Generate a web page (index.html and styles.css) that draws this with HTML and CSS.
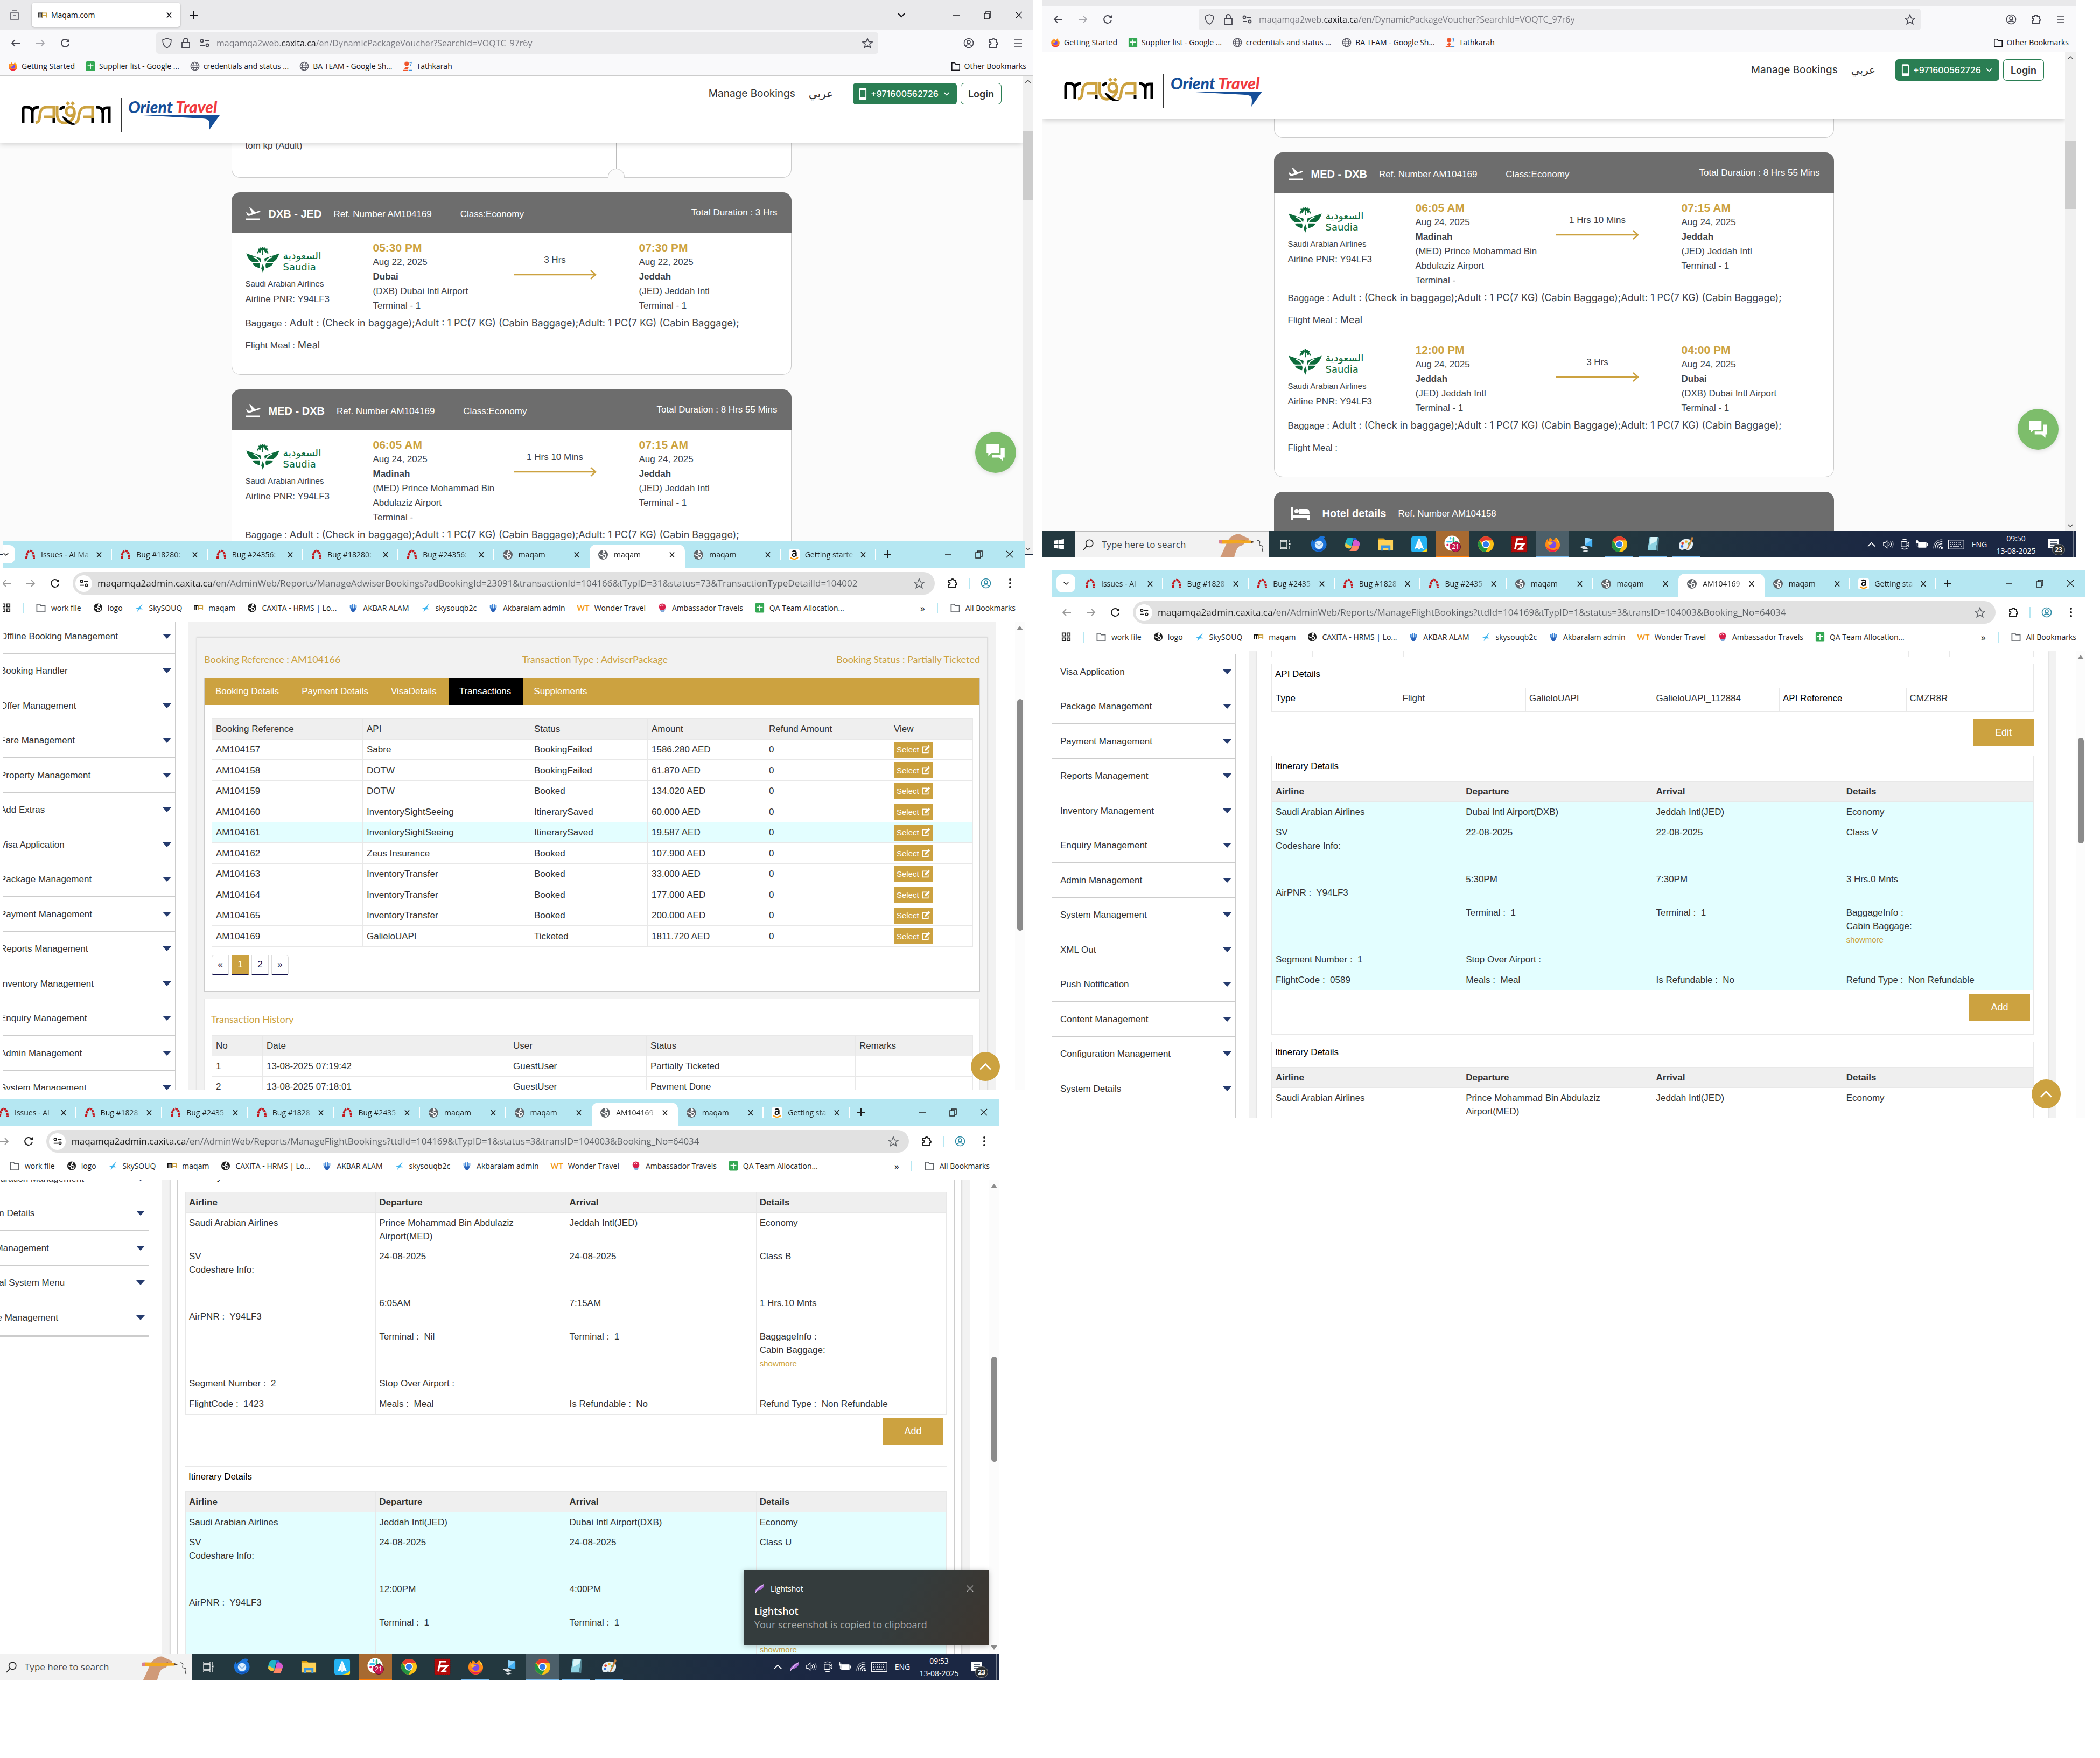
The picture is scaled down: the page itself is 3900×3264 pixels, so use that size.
FILE: index.html
```html
<!DOCTYPE html>
<html lang="en">
<head>
<meta charset="utf-8">
<title>Booking voucher review</title>
<link rel="stylesheet" href="styles.css">
</head>
<body>
<svg class="defs" aria-hidden="true">
  <symbol id="x" viewBox="0 0 20 20"><path d="M5 4l10 12M15 4L5 16" fill="none" stroke="currentColor" stroke-width="2"/></symbol>
  <symbol id="plus" viewBox="0 0 20 20"><path d="M10 3v14M3 10h14" fill="none" stroke="currentColor" stroke-width="2"/></symbol>
  <symbol id="chev" viewBox="0 0 20 20"><path d="M4 7l6 6 6-6" fill="none" stroke="currentColor" stroke-width="2"/></symbol>
  <symbol id="chevup" viewBox="0 0 20 20"><path d="M3 14l7-7 7 7" fill="none" stroke="currentColor" stroke-width="2"/></symbol>
  <symbol id="min" viewBox="0 0 20 20"><path d="M4 10h12" stroke="currentColor" stroke-width="1.5"/></symbol>
  <symbol id="restore" viewBox="0 0 20 20"><path d="M4 7h9v10H4zM7 7V4h9v10h-3" fill="none" stroke="currentColor" stroke-width="1.5"/></symbol>
  <symbol id="close" viewBox="0 0 20 20"><path d="M4 4l12 12M16 4L4 16" fill="none" stroke="currentColor" stroke-width="1.3"/></symbol>
  <symbol id="back" viewBox="0 0 20 20"><path d="M18 10H3M9 4l-6 6 6 6" fill="none" stroke="currentColor" stroke-width="1.8"/></symbol>
  <symbol id="fwd" viewBox="0 0 20 20"><path d="M2 10h15M11 4l6 6-6 6" fill="none" stroke="currentColor" stroke-width="1.8"/></symbol>
  <symbol id="reload" viewBox="0 0 20 20"><path d="M17 11a7 7 0 1 1-2-6l2 2" fill="none" stroke="currentColor" stroke-width="2"/><path d="M18 2v6h-6z" fill="currentColor"/></symbol>
  <symbol id="shield" viewBox="0 0 20 20"><path d="M10 1l8 3c0 7-2 12-8 15C4 16 2 11 2 4z" fill="none" stroke="currentColor" stroke-width="1.6"/></symbol>
  <symbol id="lock" viewBox="0 0 20 20"><path d="M3 9h14v10H3zM6 9V5a4 4 0 0 1 8 0v4" fill="none" stroke="currentColor" stroke-width="1.8"/></symbol>
  <symbol id="tune" viewBox="0 0 20 20"><circle cx="5" cy="6" r="2.5" fill="none" stroke="currentColor" stroke-width="1.8"/><circle cx="15" cy="14" r="2.5" fill="none" stroke="currentColor" stroke-width="1.8"/><path d="M10 6h8M2 14h8" stroke="currentColor" stroke-width="1.8"/></symbol>
  <symbol id="star" viewBox="0 0 20 20"><path d="M10 1.5l2.5 6 6.5.5-5 4.200 1.600 6.300L10 15l-5.600 3.500L6 12.200 1 8l6.500-.5z" fill="none" stroke="currentColor" stroke-width="1.600"/></symbol>
  <symbol id="person" viewBox="0 0 20 20"><circle cx="10" cy="10" r="8.500" fill="none" stroke="currentColor" stroke-width="1.600"/><circle cx="10" cy="8" r="3" fill="none" stroke="currentColor" stroke-width="1.600"/><path d="M4 16c2-4 10-4 12 0" fill="none" stroke="currentColor" stroke-width="1.600"/></symbol>
  <symbol id="puzzle" viewBox="0 0 20 20"><path d="M3 4h4.500a2.500 2 0 0 1 5 0H16v5a2 2 0 0 1 0 4v5H3v-5a2.500 2.500 0 0 0 0-5z" fill="none" stroke="currentColor" stroke-width="1.900"/></symbol>
  <symbol id="menu" viewBox="0 0 20 20"><path d="M3 4h14M3 10h14M3 16h14" stroke="currentColor" stroke-width="1.600"/></symbol>
  <symbol id="dots" viewBox="0 0 20 20"><circle cx="10" cy="3" r="2" fill="currentColor"/><circle cx="10" cy="10" r="2" fill="currentColor"/><circle cx="10" cy="17" r="2" fill="currentColor"/></symbol>
  <symbol id="folder" viewBox="0 0 20 20"><path d="M2 3h6l2 3h8v12H2z" fill="none" stroke="currentColor" stroke-width="1.800"/></symbol>
  <symbol id="apps" viewBox="0 0 20 20"><path d="M2 2h6v6H2zM12 2h6v6h-6zM2 12h6v6H2zM12 12h6v6h-6z" fill="none" stroke="currentColor" stroke-width="2"/></symbol>
  <symbol id="wire" viewBox="0 0 20 20"><g fill="none" stroke="#5b5b66" stroke-width="1.600"><circle cx="10" cy="10" r="8.500"/><ellipse cx="10" cy="10" rx="4" ry="8.500"/><path d="M2 7.500h16M2 12.500h16"/></g></symbol>
  <symbol id="globe" viewBox="0 0 20 20"><circle cx="10" cy="10" r="9" fill="currentColor"/><path d="M10 3c4 0 3 3 1 3s-2 3 0 3 5 1 4 4-4 4-5 3 1-3-1-4-5-1-6-3" fill="none" stroke="#fff" stroke-width="2"/></symbol>
  <symbol id="redmine" viewBox="0 0 20 20"><path d="M3 17c0-19 14-19 14 0" fill="none" stroke="#c4161c" stroke-width="4" stroke-dasharray="4.500 1"/></symbol>
  <symbol id="amazon" viewBox="0 0 20 20"><rect width="20" height="20" rx="3" fill="#fff"/><path d="M6.500 5c1-3 7-3 7 1v6l1 1M13 7c-9 0-7 7-3 6 2 0 3-2 3-4" fill="none" stroke="#111" stroke-width="2.200"/><path d="M3 15c4 4 10 4 14 0" fill="none" stroke="#f90" stroke-width="2"/></symbol>
  <symbol id="sheet" viewBox="0 0 20 20"><rect x="1" width="18" height="20" rx="2" fill="#34a853"/><path d="M10 4v12M4 9h12" stroke="#fff" stroke-width="2"/></symbol>
  <symbol id="bird" viewBox="0 0 20 20"><path d="M17 1l-5 9 5 3-7 0-5 6 2-7-5-1 7-2z" fill="#3cb4ef"/></symbol>
  <symbol id="ma" viewBox="0 0 20 20"><path d="M1 15V6h4v9M5 6h4v9" fill="none" stroke="#111" stroke-width="2"/><path d="M10 15V6h8v9M10 11h8" fill="none" stroke="#cca240" stroke-width="2"/></symbol>
  <symbol id="crest" viewBox="0 0 20 20"><path d="M4 4v6l3 3V5M8 2v10M12 2v10M16 4v6l-3 3V5" fill="none" stroke="#3f86d8" stroke-width="2"/><path d="M4 11c1 5 4 8 6 8s5-3 6-8z" fill="#2a62b8"/></symbol>
  <symbol id="ball" viewBox="0 0 20 20"><path d="M3 11a8 7 0 0 0 14 1l-4 7H8z" fill="#7fa7d8"/><circle cx="10" cy="8" r="7" fill="#d81e4a"/><path d="M6 6c3-3 5-2 6 0" stroke="#fff" stroke-width="1.500" fill="none"/></symbol>
  <symbol id="tath" viewBox="0 0 20 20"><circle cx="8" cy="5" r="4.500" fill="#f0562b"/><path d="M3 15c3-6 8-4 9-2l-3 4z" fill="#f0562b"/><path d="M14 3l4-1-2 7" stroke="#3b8ede" fill="none" stroke-width="1.500"/><path d="M1 18.500h10" stroke="#f0562b" stroke-width="2"/><path d="M12 18.500h7" stroke="#3b8ede" stroke-width="2"/></symbol>
  <symbol id="firefox" viewBox="0 0 32 32"><path d="M22 2c2 4 8 7 8 15a14 14 0 0 1-28 0c0-5 2-9 4-11l1 4c2-2 3-5 3-7 3 1 5 4 6 6 3-1 5-4 6-7z" fill="#ff8a16"/><path d="M3 20a13.500 13.500 0 0 0 26 1c-3 7-19 9-26-1z" fill="#f0214b"/><path d="M22 2c2 4 7 8 7 13l-4-5z" fill="#ffdf3d"/><circle cx="16" cy="17" r="7" fill="#7a4be8"/><path d="M7 12c4-2 7 1 10 1-1 3-5 2-6 5-2-1-4-3-4-6z" fill="#ffb52e"/></symbol>
  <symbol id="chrome" viewBox="0 0 32 32"><circle cx="16" cy="16" r="15" fill="#fbc116"/><path d="M16 16L3 8.500A15 15 0 0 1 29 8.500H16z" fill="#e33b2e"/><path d="M3 8.500a15 15 0 0 0 12 22.400l7-11.400-12 0z" fill="#229342"/><circle cx="16" cy="16" r="7.500" fill="#fff"/><circle cx="16" cy="16" r="5.800" fill="#2f7bed"/></symbol>
  <symbol id="tbird" viewBox="0 0 32 32"><path d="M14 4c5-5 13-4 14-1-2 1-3 1-2 3 5 4 6 13 2 18-6 9-20 8-25 0C0 18 0 10 4 7l2 4c2-3 4-5 8-7z" fill="#1a73d9"/><path d="M4 18c4 12 20 10 24 2-2 10-18 16-24-2z" fill="#1150b5"/><circle cx="16" cy="17" r="8" fill="#dcefff"/><path d="M10 14l6 5 6-5" fill="none" stroke="#8ab8e6" stroke-width="2"/></symbol>
  <symbol id="copilot" viewBox="0 0 32 32"><path d="M10 3h10c-4 2-3 10-6 19-1 3-5 3-8 1-3-1-5-5-4-8C4 9 5 3 10 3z" fill="#22b5c8"/><path d="M3 14l11 6-1 3c-3 2-9 1-11-4z" fill="#f2c438"/><path d="M16 3h5c3 0 3 5 5 5h-9z" fill="#1d62d6"/><path d="M22 29H12c4-2 3-10 6-19 1-3 5-3 8-1 3 1 5 5 4 8-2 6-3 12-8 12z" fill="#d65ad0"/><path d="M29 19c-2 6-3 10-7 10H10c4-2 4-7 5-10z" fill="#ff8763"/></symbol>
  <symbol id="explorer" viewBox="0 0 32 32"><path d="M2 5h10l3 3h15v19H2z" fill="#ffd257"/><path d="M2 5h10l3 3H2z" fill="#dd9a07"/><path d="M7 28V18h18v10h-4v-5H11v5z" fill="#3a96e3"/></symbol>
  <symbol id="plane" viewBox="0 0 32 32"><rect x="1" y="1" width="30" height="30" rx="4" fill="#25b3f3"/><path d="M16 31c7-1 11-3 15-7v4a3 3 0 0 1-3 3z" fill="#ffd810"/><path d="M16 3l9 22-6-2-3 4-3-4-6 2z" fill="#fff"/><path d="M16 9v15" stroke="#8ad0f5" stroke-width="1.500"/></symbol>
  <symbol id="slack" viewBox="0 0 32 32"><circle cx="15" cy="15" r="14.500" fill="#fff"/><g stroke-width="3.600" stroke-linecap="round"><path d="M6 12h7M12 5v1" stroke="#36c5f0"/><path d="M18 5v7M23 12h1" stroke="#2eb67d"/><path d="M12 18v6M6 18h1" stroke="#e01e5a"/></g><circle cx="22" cy="22" r="9.500" fill="#c8174f" stroke="#55122b"/></symbol>
  <symbol id="fz" viewBox="0 0 32 32"><rect x="1" y="1" width="30" height="30" fill="#b50a0a" stroke="#7b0000" stroke-dasharray="2 2"/><path d="M8 25L12 6h11M10 15h8M16 15h9l-9 10h8" fill="none" stroke="#fff" stroke-width="3.400"/></symbol>
  <symbol id="remote" viewBox="0 0 32 32"><path d="M14 3l14 3v15l-14-3z" fill="#45b2f5"/><path d="M14 3l14 3-14 11z" fill="#8fd4fb"/><path d="M4 21l9-2 8 5-9 2zM9 29l7-2 5 2-7 2z" fill="#dfe5e8"/></symbol>
  <symbol id="notepad" viewBox="0 0 32 32"><path d="M10 2h16l-4 25H6z" fill="#8ed3e2"/><path d="M12 2h13l-2 8-13 7z" fill="#d9f4f7"/><path d="M22 27l4-25 2 1-2 26z" fill="#4f7f8d"/></symbol>
  <symbol id="paint" viewBox="0 0 32 32"><path d="M16 6C8 6 2 12 2 19s5 9 9 7 5 1 8 1c7 0 10-6 10-12S23 6 16 6z" fill="#e3eef4"/><circle cx="9" cy="14" r="2.500" fill="#e3402d"/><circle cx="16" cy="11" r="2.500" fill="#f0b429"/><circle cx="8" cy="20" r="2.500" fill="#2c6ee0"/><circle cx="22" cy="15" r="2.500" fill="#38a851"/><path d="M27 1l3 3-11 22-2-1z" fill="#c7813a"/></symbol>
  <symbol id="taskview" viewBox="0 0 24 24"><g fill="none" stroke="#fff" stroke-width="1.300"><path d="M3 7h12v10H3zM3 3v2h12V3M3 21v-2h12v2M20 3v5M20 14v7"/></g><path d="M18.500 9.500h3v3h-3z" fill="#fff"/></symbol>
  <symbol id="win" viewBox="0 0 20 20"><path d="M1 3.500l8-1v7H1zM10 2.300l9-1.300v8.500h-9zM1 10.500h8v7l-8-1zM10 10.500h9V19l-9-1.300z" fill="#fff"/></symbol>
  <symbol id="search" viewBox="0 0 20 20"><circle cx="12" cy="8" r="6" fill="none" stroke="#222" stroke-width="1.500"/><path d="M8 12l-6 7" stroke="#222" stroke-width="1.500"/></symbol>
  <symbol id="hand" viewBox="0 0 90 48"><path d="M4 48C14 28 18 12 26 9c6-5 14-6 18-2l14 6-2 5-6 1c-2 6-6 7-10 8-4 2-7 9-10 21z" fill="#d09a78"/><path d="M34 20c5-3 12-2 16-4" fill="none" stroke="#9a6849" stroke-width="2"/><path d="M1 16l6-.5v7l-6-.5z" fill="#d98192"/><path d="M7 15.500l54 1v5L7 22.500z" fill="#f3a81f"/><path d="M61 16.500l7 3-7 2z" fill="#59422e"/><path d="M72 16c12 1 0 9 8 10s-1 9 4 11" fill="none" stroke="#4b4b4b" stroke-width="1.300"/></symbol>
  <symbol id="sound" viewBox="0 0 24 24"><g fill="none" stroke="#fff" stroke-width="1.300"><path d="M3 9h3l4-4v14l-4-4H3zM13 9c2 2 2 4 0 6M16 7c3 3 3 7 0 10"/><path d="M19 5c4 4 4 10 0 14" opacity=".5"/></g></symbol>
  <symbol id="cam" viewBox="0 0 24 24"><g fill="none" stroke="#fff" stroke-width="1.400"><rect x="5" y="7" width="11" height="10" rx="1"/><path d="M16 11l4-3v8l-4-3M6 4c3-2 8-2 11 0M6 20c3 2 8 2 11 0"/></g></symbol>
  <symbol id="battery" viewBox="0 0 24 24"><path d="M6 8h15v10H6z" fill="#fff" stroke="#fff"/><path d="M22 10h2v5h-2zM1 6h5v4H1zM2 3h1v3H2zM4 3h1v3H4zM3 10h1v5h3v1H3z" fill="#fff"/></symbol>
  <symbol id="wifi" viewBox="0 0 24 24"><g fill="none" stroke="#fff" stroke-width="1.400"><path d="M14 20c0-3 2-5 6-5M10 20c0-6 4-9 10-9M6 20C6 12 11 7 20 7"/><path d="M3 20C3 10 9 3 20 3" opacity=".6"/></g><circle cx="19" cy="19" r="2" fill="#fff"/></symbol>
  <symbol id="keyb" viewBox="0 0 30 18"><rect x=".7" y=".7" width="28.600" height="16.600" fill="none" stroke="#fff" stroke-width="1.300"/><path d="M4 5h22M4 9h22" stroke="#fff" stroke-width="1.500" stroke-dasharray="1.500 2"/><path d="M4 13h3M9 13h12M23 13h3" stroke="#fff" stroke-width="1.300"/></symbol>
  <symbol id="note" viewBox="0 0 20 20"><path d="M0 0h20v17h-7l-3 3v-3H0z" fill="#fff"/><path d="M4 5h12M4 9h12M4 13h8" stroke="#22304a" stroke-width="1.300"/></symbol>
  <symbol id="feather" viewBox="0 0 20 20"><path d="M1 19C1 9 10 4 19 1c0 8-5 12-14 14z" fill="#a563cf"/><path d="M2 18C6 11 12 6 18 2" stroke="#e5cff3" stroke-width="1.500" fill="none"/></symbol>
  <symbol id="landing" viewBox="0 0 28 28"><path d="M1 11l3 1 2 2 6-1L7 2l3 1 8 8 8-3c2 0 2 2 0 3L6 18l-3-2z" fill="#fff"/><path d="M1 24h26" stroke="#fff" stroke-width="3"/></symbol>
  <symbol id="bed" viewBox="0 0 34 26"><path d="M0 1h4v16h30v9h-4v-5H4v5H0z" fill="#fff"/><circle cx="10" cy="9" r="4" fill="#fff"/><path d="M15 5h14c4 0 5 3 5 10H15z" fill="#fff"/></symbol>
  <symbol id="arrow" viewBox="0 0 154 18"><path d="M0 9h152M143 1l9 8-9 8" fill="none" stroke="#cca240" stroke-width="2.500"/></symbol>
  <symbol id="phone" viewBox="0 0 16 24"><path d="M3 0h10a2 2 0 0 1 2 2v20a2 2 0 0 1-2 2H3a2 2 0 0 1-2-2V2a2 2 0 0 1 2-2zm0 4v14h10V4z" fill="#fff"/></symbol>
  <symbol id="chat" viewBox="0 0 40 40"><path d="M4 5h22v16H13l-6 5v-5H4z" fill="#fff"/><path d="M29 12h7v17h-3v6l-7-6H14v-5h15z" fill="#fff"/></symbol>
  <symbol id="edit" viewBox="0 0 20 20"><path d="M15 11v6H3V4h9" fill="none" stroke="#fff" stroke-width="2"/><path d="M7 13l1-4 8-8 3 3-8 8z" fill="#fff"/></symbol>
  <symbol id="saudia" viewBox="0 0 64 50"><g fill="#0c6b3b"><path d="M0 13l29 10-3 18c-7-1-13-5-14-9l4 0C6 27 3 22 0 13zM64 13L35 23l3 18c7-1 13-5 14-9l-4 0c10-5 13-10 16-19z"/><path d="M29 42l3-9 3 9-3 8zM31 4h2v12h-2z"/></g><g stroke="#0c6b3b" stroke-width="2.500" fill="none"><path d="M22 13c1-5 5-8 10-8s9 3 10 8M26 12c1-4 3-7 6-7s5 3 6 7M23 5l18 0M27 2l5 3 5-3M32 0v5"/></g><path d="M14 20c8 2 13 8 14 18M50 20c-8 2-13 8-14 18M12 31l16 0M52 31l-16 0" stroke="#fff" stroke-width="2" fill="none"/></symbol>
  <symbol id="maqam" viewBox="0 0 168 46"><g fill="none" stroke="#000" stroke-width="5"><path d="M4 40V15c0-3 1-4 4-4h3c8 0 10 5 10 10v19M21 21c0-6 3-10 12-10M164 40V12h-4c-8 0-8 6-8 12v16M152 22c0-7-4-11-12-11M61 32v8M133 32v8M73 16c1-4 4-5 8-5"/></g><g fill="none" stroke="#cca240" stroke-width="5"><path d="M27 40c8-1 7-7 8-14 1-11 5-15 13-15h13v18H43M67 8v16c0 12 8 17 15 16 12-1 19-12 17-22-1-10-15-9-15 0 0 9 9 12 15 5M101 40c7-2 5-9 7-16 2-10 6-13 13-13h12v18h-18"/></g><path d="M76 28c9 0 14 14 28 14-9 5-21 0-28-14z" fill="#000"/><path d="M87 0l4 4-4 4-4-4zM96 0l4 4-4 4-4-4z" fill="#cca240"/></symbol>
  <symbol id="swoosh" viewBox="0 0 142 28"><path d="M0 0h142l-20 28c2-17 2-21-12-22z" fill="#164f99"/></symbol>
</svg>

<main class="desk">
<div class="col">

<section class="win ff ff-top">
  <div class="ff-in">
    <div class="ff-tabs"><button class="ib recent" aria-label="Recent"><svg viewBox="0 0 20 20"><path d="M3 6h14v12H3zM5 2h10M8 11h4" fill="none" stroke="#5b5b66" stroke-width="1.700"/></svg></button>
      <div class="ff-tab"><svg><use href="#ma"/></svg><span>Maqam.com</span><button class="ib" aria-label="Close tab"><svg><use href="#x"/></svg></button></div>
      <button class="ib" aria-label="New tab"><svg><use href="#plus"/></svg></button>
      <div class="wc"><button class="ib first" aria-label="List tabs"><svg><use href="#chev"/></svg></button><button class="ib" aria-label="Minimise"><svg><use href="#min"/></svg></button><button class="ib" aria-label="Restore"><svg><use href="#restore"/></svg></button><button class="ib" aria-label="Close"><svg><use href="#close"/></svg></button></div>
    </div>
    <div class="ff-bar"><button class="ib" aria-label="Back"><svg><use href="#back"/></svg></button><button class="ib dim" aria-label="Forward"><svg><use href="#fwd"/></svg></button><button class="ib" aria-label="Reload"><svg><use href="#reload"/></svg></button>
      <div class="ff-url"><svg><use href="#shield"/></svg><svg><use href="#lock"/></svg><svg><use href="#tune"/></svg><input class="addr" aria-label="Address" value="maqamqa2web.caxita.ca/en/DynamicPackageVoucher?SearchId=VOQTC_97r6y"><svg><use href="#star"/></svg></div>
      <div class="ff-tools"><button class="ib" aria-label="Account"><svg><use href="#person"/></svg></button><button class="ib" aria-label="Extensions"><svg><use href="#puzzle"/></svg></button><button class="ib" aria-label="Menu"><svg><use href="#menu"/></svg></button></div>
    </div>
    <div class="ff-marks"><a href="#"><svg><use href="#firefox"/></svg>Getting Started</a><a href="#"><svg><use href="#sheet"/></svg>Supplier list - Google ...</a><a href="#"><svg><use href="#wire"/></svg>credentials and status ...</a><a href="#"><svg><use href="#wire"/></svg>BA TEAM - Google Sh...</a><a href="#"><svg><use href="#tath"/></svg>Tathkarah</a><a class="end" href="#"><svg><use href="#folder"/></svg>Other Bookmarks</a></div>
    <div class="ff-body">
      <div class="site">
        <header class="site-head"><svg class="maqam"><use href="#maqam"/></svg><i class="rule"></i><div class="orient"><span><b>Orient</b> <em>Travel</em></span><svg><use href="#swoosh"/></svg></div>
          <nav><a href="#">Manage Bookings</a><a href="#" lang="ar" class="ar">عربي</a><button class="call"><svg class="ph"><use href="#phone"/></svg>+971600562726<svg class="cv"><use href="#chev"/></svg></button><button class="login">Login</button></nav></header>
        <div class="cards">
          <article class="card pax"><p>tom kp (Adult)</p><i class="dotted"></i><i class="cut"></i></article>
          <article class="card">
            <header><svg class="hi"><use href="#landing"/></svg><h2>DXB - JED</h2><span class="ref">Ref. Number AM104169</span><span>Class:Economy</span><span class="dur">Total Duration : 3 Hrs</span></header>
            <div class="seg"><div class="air"><div class="sv"><svg><use href="#saudia"/></svg><div><span lang="ar">السعودية</span><b>Saudia</b></div></div><small>Saudi Arabian Airlines</small><p>Airline PNR: Y94LF3</p></div>
              <div class="pt"><time>05:30 PM</time><p>Aug 22, 2025</p><p><b>Dubai</b></p><p>(DXB) Dubai Intl Airport</p><p>Terminal - 1</p></div>
              <div class="mid"><span>3 Hrs</span><svg><use href="#arrow"/></svg></div>
              <div class="pt"><time>07:30 PM</time><p>Aug 22, 2025</p><p><b>Jeddah</b></p><p>(JED) Jeddah Intl</p><p>Terminal - 1</p></div>
              <p class="bag">Baggage : <span>Adult : (Check in baggage);Adult : 1 PC(7 KG) (Cabin Baggage);Adult: 1 PC(7 KG) (Cabin Baggage);</span></p><p class="meal">Flight Meal : <span>Meal</span></p></div>
          </article>
          <article class="card">
            <header><svg class="hi"><use href="#landing"/></svg><h2>MED - DXB</h2><span class="ref">Ref. Number AM104169</span><span>Class:Economy</span><span class="dur">Total Duration : 8 Hrs 55 Mins</span></header>
            <div class="seg"><div class="air"><div class="sv"><svg><use href="#saudia"/></svg><div><span lang="ar">السعودية</span><b>Saudia</b></div></div><small>Saudi Arabian Airlines</small><p>Airline PNR: Y94LF3</p></div>
              <div class="pt"><time>06:05 AM</time><p>Aug 24, 2025</p><p><b>Madinah</b></p><p>(MED) Prince Mohammad Bin Abdulaziz Airport</p><p>Terminal -</p></div>
              <div class="mid"><span>1 Hrs 10 Mins</span><svg><use href="#arrow"/></svg></div>
              <div class="pt"><time>07:15 AM</time><p>Aug 24, 2025</p><p><b>Jeddah</b></p><p>(JED) Jeddah Intl</p><p>Terminal - 1</p></div>
              <p class="bag">Baggage : <span>Adult : (Check in baggage);Adult : 1 PC(7 KG) (Cabin Baggage);Adult: 1 PC(7 KG) (Cabin Baggage);</span></p></div>
          </article>
        </div>
      </div>
      <div class="fsb"><svg><use href="#chevup"/></svg><i></i><svg class="dn"><use href="#chev"/></svg></div>
      <button class="chat" aria-label="Chat"><svg><use href="#chat"/></svg></button>
    </div>
  </div>
</section>

<section class="win cr cr-adviser">
  <div class="cr-in">
    <div class="strip"><button class="tsearch" aria-label="Search tabs"><svg><use href="#chev"/></svg></button>
      <div class="tabs"><div class="tab"><svg><use href="#redmine"/></svg><span>Issues - AI Ma</span><svg class="tx"><use href="#x"/></svg></div><div class="tab"><svg><use href="#redmine"/></svg><span>Bug #18280:</span><svg class="tx"><use href="#x"/></svg></div><div class="tab"><svg><use href="#redmine"/></svg><span>Bug #24356:</span><svg class="tx"><use href="#x"/></svg></div><div class="tab"><svg><use href="#redmine"/></svg><span>Bug #18280:</span><svg class="tx"><use href="#x"/></svg></div><div class="tab"><svg><use href="#redmine"/></svg><span>Bug #24356:</span><svg class="tx"><use href="#x"/></svg></div><div class="tab"><svg class="gg"><use href="#globe"/></svg><span>maqam</span><svg class="tx"><use href="#x"/></svg></div><div class="tab on"><svg class="gg"><use href="#globe"/></svg><span>maqam</span><svg class="tx"><use href="#x"/></svg></div><div class="tab"><svg class="gg"><use href="#globe"/></svg><span>maqam</span><svg class="tx"><use href="#x"/></svg></div><div class="tab"><svg><use href="#amazon"/></svg><span>Getting starte</span><svg class="tx"><use href="#x"/></svg></div></div>
      <button class="ib" aria-label="New tab"><svg><use href="#plus"/></svg></button>
      <div class="wc"><button class="ib" aria-label="Minimise"><svg><use href="#min"/></svg></button><button class="ib" aria-label="Restore"><svg><use href="#restore"/></svg></button><button class="ib" aria-label="Close"><svg><use href="#close"/></svg></button></div></div>
    <div class="cbar"><button class="ib dim" aria-label="Back"><svg><use href="#back"/></svg></button><button class="ib dim" aria-label="Forward"><svg><use href="#fwd"/></svg></button><button class="ib" aria-label="Reload"><svg><use href="#reload"/></svg></button>
      <div class="pill"><i><svg><use href="#tune"/></svg></i><input class="addr" aria-label="Address" value="maqamqa2admin.caxita.ca/en/AdminWeb/Reports/ManageAdwiserBookings?adBookingId=23091&amp;transactionId=104166&amp;tTypID=31&amp;status=73&amp;TransactionTypeDetailId=104002"><svg><use href="#star"/></svg></div>
      <div class="ctools"><button class="ib" aria-label="Extensions"><svg><use href="#puzzle"/></svg></button><i class="vs"></i><button class="ib me" aria-label="Profile"><svg><use href="#person"/></svg></button><button class="ib" aria-label="Menu"><svg><use href="#dots"/></svg></button></div></div>
    <div class="marks"><svg><use href="#apps"/></svg><i class="vs"></i><a href="#"><svg class="fo"><use href="#folder"/></svg>work file</a><a href="#"><svg><use href="#globe"/></svg>logo</a><a href="#"><svg><use href="#bird"/></svg>SkySOUQ</a><a href="#"><svg><use href="#ma"/></svg>maqam</a><a href="#"><svg><use href="#globe"/></svg>CAXITA - HRMS | Lo...</a><a href="#"><svg><use href="#crest"/></svg>AKBAR ALAM</a><a href="#"><svg><use href="#bird"/></svg>skysouqb2c</a><a href="#"><svg><use href="#crest"/></svg>Akbaralam admin</a><a href="#"><b class="wt">WT</b>Wonder Travel</a><a href="#"><svg><use href="#ball"/></svg>Ambassador Travels</a><a href="#"><svg><use href="#sheet"/></svg>QA Team Allocation...</a><span class="more">»</span><i class="vs"></i><a href="#"><svg class="fo"><use href="#folder"/></svg>All Bookmarks</a></div>
    <div class="cbody">
      <nav class="side"><ul><li><a href="#">Offline Booking Management</a></li><li><a href="#">Booking Handler</a></li><li><a href="#">Offer Management</a></li><li><a href="#">Fare Management</a></li><li><a href="#">Property Management</a></li><li><a href="#">Add Extras</a></li><li><a href="#">Visa Application</a></li><li><a href="#">Package Management</a></li><li><a href="#">Payment Management</a></li><li><a href="#">Reports Management</a></li><li><a href="#">Inventory Management</a></li><li><a href="#">Enquiry Management</a></li><li><a href="#">Admin Management</a></li><li><a href="#">System Management</a></li></ul></nav>
      <div class="main"><div class="sheet">
        <div class="heads"><span>Booking Reference : AM104166</span><span>Transaction Type : AdviserPackage</span><span>Booking Status : Partially Ticketed</span></div>
        <div class="panel">
          <div class="gtabs"><a href="#">Booking Details</a><a href="#">Payment Details</a><a href="#">VisaDetails</a><a href="#" class="on">Transactions</a><a href="#">Supplements</a></div>
          <table class="grid tx">
            <thead><tr><th>Booking Reference</th><th>API</th><th>Status</th><th>Amount</th><th>Refund Amount</th><th>View</th></tr></thead>
            <tbody>
            <tr><td>AM104157</td><td>Sabre</td><td>BookingFailed</td><td>1586.280 AED</td><td>0</td><td><button>Select <svg><use href="#edit"/></svg></button></td></tr>
            <tr><td>AM104158</td><td>DOTW</td><td>BookingFailed</td><td>61.870 AED</td><td>0</td><td><button>Select <svg><use href="#edit"/></svg></button></td></tr>
            <tr><td>AM104159</td><td>DOTW</td><td>Booked</td><td>134.020 AED</td><td>0</td><td><button>Select <svg><use href="#edit"/></svg></button></td></tr>
            <tr><td>AM104160</td><td>InventorySightSeeing</td><td>ItinerarySaved</td><td>60.000 AED</td><td>0</td><td><button>Select <svg><use href="#edit"/></svg></button></td></tr>
            <tr class="hl"><td>AM104161</td><td>InventorySightSeeing</td><td>ItinerarySaved</td><td>19.587 AED</td><td>0</td><td><button>Select <svg><use href="#edit"/></svg></button></td></tr>
            <tr><td>AM104162</td><td>Zeus Insurance</td><td>Booked</td><td>107.900 AED</td><td>0</td><td><button>Select <svg><use href="#edit"/></svg></button></td></tr>
            <tr><td>AM104163</td><td>InventoryTransfer</td><td>Booked</td><td>33.000 AED</td><td>0</td><td><button>Select <svg><use href="#edit"/></svg></button></td></tr>
            <tr><td>AM104164</td><td>InventoryTransfer</td><td>Booked</td><td>177.000 AED</td><td>0</td><td><button>Select <svg><use href="#edit"/></svg></button></td></tr>
            <tr><td>AM104165</td><td>InventoryTransfer</td><td>Booked</td><td>200.000 AED</td><td>0</td><td><button>Select <svg><use href="#edit"/></svg></button></td></tr>
            <tr><td>AM104169</td><td>GalieloUAPI</td><td>Ticketed</td><td>1811.720 AED</td><td>0</td><td><button>Select <svg><use href="#edit"/></svg></button></td></tr>
            </tbody></table>
          <div class="pager"><a href="#">«</a><a href="#" class="on">1</a><a href="#">2</a><a href="#">»</a></div>
        </div>
        <div class="panel hist"><h3>Transaction History</h3>
          <table class="grid hs"><thead><tr><th>No</th><th>Date</th><th>User</th><th>Status</th><th>Remarks</th></tr></thead><tbody>
          <tr><td>1</td><td>13-08-2025 07:19:42</td><td>GuestUser</td><td>Partially Ticketed</td><td></td></tr>
          <tr><td>2</td><td>13-08-2025 07:18:01</td><td>GuestUser</td><td>Payment Done</td><td></td></tr></tbody></table></div>
      </div></div>
      <div class="csb"><i></i></div>
      <button class="top" aria-label="Back to top"><svg><use href="#chevup"/></svg></button>
    </div>
  </div>
</section>

<section class="win cr cr-flight2">
  <div class="cr-in">
    <div class="strip"><button class="tsearch" aria-label="Search tabs"><svg><use href="#chev"/></svg></button>
      <div class="tabs"><div class="tab"><svg><use href="#redmine"/></svg><span>Issues - AI</span><svg class="tx"><use href="#x"/></svg></div><div class="tab"><svg><use href="#redmine"/></svg><span>Bug #1828</span><svg class="tx"><use href="#x"/></svg></div><div class="tab"><svg><use href="#redmine"/></svg><span>Bug #2435</span><svg class="tx"><use href="#x"/></svg></div><div class="tab"><svg><use href="#redmine"/></svg><span>Bug #1828</span><svg class="tx"><use href="#x"/></svg></div><div class="tab"><svg><use href="#redmine"/></svg><span>Bug #2435</span><svg class="tx"><use href="#x"/></svg></div><div class="tab"><svg class="gg"><use href="#globe"/></svg><span>maqam</span><svg class="tx"><use href="#x"/></svg></div><div class="tab"><svg class="gg"><use href="#globe"/></svg><span>maqam</span><svg class="tx"><use href="#x"/></svg></div><div class="tab on"><svg class="gg"><use href="#globe"/></svg><span>AM104169</span><svg class="tx"><use href="#x"/></svg></div><div class="tab"><svg class="gg"><use href="#globe"/></svg><span>maqam</span><svg class="tx"><use href="#x"/></svg></div><div class="tab"><svg><use href="#amazon"/></svg><span>Getting sta</span><svg class="tx"><use href="#x"/></svg></div></div>
      <button class="ib" aria-label="New tab"><svg><use href="#plus"/></svg></button>
      <div class="wc"><button class="ib" aria-label="Minimise"><svg><use href="#min"/></svg></button><button class="ib" aria-label="Restore"><svg><use href="#restore"/></svg></button><button class="ib" aria-label="Close"><svg><use href="#close"/></svg></button></div></div>
    <div class="cbar"><button class="ib dim" aria-label="Back"><svg><use href="#back"/></svg></button><button class="ib dim" aria-label="Forward"><svg><use href="#fwd"/></svg></button><button class="ib" aria-label="Reload"><svg><use href="#reload"/></svg></button>
      <div class="pill"><i><svg><use href="#tune"/></svg></i><input class="addr" aria-label="Address" value="maqamqa2admin.caxita.ca/en/AdminWeb/Reports/ManageFlightBookings?ttdId=104169&amp;tTypID=1&amp;status=3&amp;transID=104003&amp;Booking_No=64034"><svg><use href="#star"/></svg></div>
      <div class="ctools"><button class="ib" aria-label="Extensions"><svg><use href="#puzzle"/></svg></button><i class="vs"></i><button class="ib me" aria-label="Profile"><svg><use href="#person"/></svg></button><button class="ib" aria-label="Menu"><svg><use href="#dots"/></svg></button></div></div>
    <div class="marks"><svg><use href="#apps"/></svg><i class="vs"></i><a href="#"><svg class="fo"><use href="#folder"/></svg>work file</a><a href="#"><svg><use href="#globe"/></svg>logo</a><a href="#"><svg><use href="#bird"/></svg>SkySOUQ</a><a href="#"><svg><use href="#ma"/></svg>maqam</a><a href="#"><svg><use href="#globe"/></svg>CAXITA - HRMS | Lo...</a><a href="#"><svg><use href="#crest"/></svg>AKBAR ALAM</a><a href="#"><svg><use href="#bird"/></svg>skysouqb2c</a><a href="#"><svg><use href="#crest"/></svg>Akbaralam admin</a><a href="#"><b class="wt">WT</b>Wonder Travel</a><a href="#"><svg><use href="#ball"/></svg>Ambassador Travels</a><a href="#"><svg><use href="#sheet"/></svg>QA Team Allocation...</a><span class="more">»</span><i class="vs"></i><a href="#"><svg class="fo"><use href="#folder"/></svg>All Bookmarks</a></div>
    <div class="cbody">
      <nav class="side"><ul><li><a href="#">Configuration Management</a></li><li><a href="#">System Details</a></li><li><a href="#">User Management</a></li><li><a href="#">General System Menu</a></li><li><a href="#">Theme Management</a></li></ul></nav>
      <div class="main"><div class="sheet white"><div class="inner">
        <section class="itin"><h3>Itinerary Details</h3>
          <table class="grid it"><thead><tr><th>Airline</th><th>Departure</th><th>Arrival</th><th>Details</th></tr></thead><tbody>
          <tr><td>Saudi Arabian Airlines</td><td>Prince Mohammad Bin Abdulaziz Airport(MED)</td><td>Jeddah Intl(JED)</td><td>Economy</td></tr>
          <tr><td>SV<br>Codeshare Info:<br>&nbsp;</td><td>24-08-2025</td><td>24-08-2025</td><td>Class B</td></tr>
          <tr><td><br>AirPNR :&nbsp; Y94LF3</td><td>6:05AM</td><td>7:15AM</td><td>1 Hrs.10 Mnts</td></tr>
          <tr><td></td><td>Terminal :&nbsp; Nil</td><td>Terminal :&nbsp; 1</td><td>BaggageInfo :<br>Cabin Baggage:<br><a href="#">showmore</a></td></tr>
          <tr><td>Segment Number :&nbsp; 2</td><td>Stop Over Airport :</td><td></td><td></td></tr>
          <tr><td>FlightCode :&nbsp; 1423</td><td>Meals :&nbsp; Meal</td><td>Is Refundable :&nbsp; No</td><td>Refund Type :&nbsp; Non Refundable</td></tr></tbody></table>
          <button class="gold">Add</button></section>
        <section class="itin"><h3>Itinerary Details</h3>
          <table class="grid it blue"><thead><tr><th>Airline</th><th>Departure</th><th>Arrival</th><th>Details</th></tr></thead><tbody>
          <tr><td>Saudi Arabian Airlines</td><td>Jeddah Intl(JED)</td><td>Dubai Intl Airport(DXB)</td><td>Economy</td></tr>
          <tr><td>SV<br>Codeshare Info:<br>&nbsp;</td><td>24-08-2025</td><td>24-08-2025</td><td>Class U</td></tr>
          <tr><td><br>AirPNR :&nbsp; Y94LF3</td><td>12:00PM</td><td>4:00PM</td><td></td></tr>
          <tr><td></td><td>Terminal :&nbsp; 1</td><td>Terminal :&nbsp; 1</td><td><br><br><a href="#">showmore</a></td></tr></tbody></table></section>
      </div></div></div>
      <div class="csb end"><i></i></div>
    </div>
    <div class="taskbar"><button class="start" aria-label="Start"><svg><use href="#win"/></svg></button><label class="find"><svg class="mag"><use href="#search"/></svg><input type="text" placeholder="Type here to search" aria-label="Search"><svg class="hand"><use href="#hand"/></svg></label>
      <button aria-label="Task view"><svg class="sm"><use href="#taskview"/></svg></button><button aria-label="Mail"><svg><use href="#tbird"/></svg></button><button aria-label="Copilot"><svg><use href="#copilot"/></svg></button><button aria-label="Files"><svg><use href="#explorer"/></svg></button><button aria-label="Send"><svg><use href="#plane"/></svg></button><button class="alert"><svg><use href="#slack"/></svg><b>21</b></button><button aria-label="Chrome"><svg><use href="#chrome"/></svg></button><button aria-label="FileZilla"><svg><use href="#fz"/></svg></button><button class="run" aria-label="Firefox"><svg><use href="#firefox"/></svg></button><button aria-label="Remote"><svg><use href="#remote"/></svg></button><button class="run act" aria-label="Chrome window"><svg><use href="#chrome"/></svg></button><button class="run" aria-label="Notepad"><svg><use href="#notepad"/></svg></button><button class="run" aria-label="Paint"><svg><use href="#paint"/></svg></button>
      <div class="tray"><svg class="c"><use href="#chevup"/></svg><svg class="c"><use href="#feather"/></svg><svg><use href="#sound"/></svg><svg><use href="#cam"/></svg><svg><use href="#battery"/></svg><svg><use href="#wifi"/></svg><svg class="kb"><use href="#keyb"/></svg><span class="lang">ENG</span><span class="clock">09:53<br>13-08-2025</span><span class="notif"><svg><use href="#note"/></svg><b>23</b></span></div></div>
  </div>
  <aside class="toast"><div class="th"><svg><use href="#feather"/></svg><span>Lightshot</span><button class="ib" aria-label="Dismiss"><svg><use href="#close"/></svg></button></div><b>Lightshot</b><p>Your screenshot is copied to clipboard</p></aside>
</section>
</div>

<div class="col right">
<section class="win ff ff-scrolled">
  <div class="ff-in">
    <div class="ff-tabs"></div>
    <div class="ff-bar"><button class="ib" aria-label="Back"><svg><use href="#back"/></svg></button><button class="ib dim" aria-label="Forward"><svg><use href="#fwd"/></svg></button><button class="ib" aria-label="Reload"><svg><use href="#reload"/></svg></button>
      <div class="ff-url"><svg><use href="#shield"/></svg><svg><use href="#lock"/></svg><svg><use href="#tune"/></svg><input class="addr" aria-label="Address" value="maqamqa2web.caxita.ca/en/DynamicPackageVoucher?SearchId=VOQTC_97r6y"><svg><use href="#star"/></svg></div>
      <div class="ff-tools"><button class="ib" aria-label="Account"><svg><use href="#person"/></svg></button><button class="ib" aria-label="Extensions"><svg><use href="#puzzle"/></svg></button><button class="ib" aria-label="Menu"><svg><use href="#menu"/></svg></button></div>
    </div>
    <div class="ff-marks"><a href="#"><svg><use href="#firefox"/></svg>Getting Started</a><a href="#"><svg><use href="#sheet"/></svg>Supplier list - Google ...</a><a href="#"><svg><use href="#wire"/></svg>credentials and status ...</a><a href="#"><svg><use href="#wire"/></svg>BA TEAM - Google Sh...</a><a href="#"><svg><use href="#tath"/></svg>Tathkarah</a><a class="end" href="#"><svg><use href="#folder"/></svg>Other Bookmarks</a></div>
    <div class="ff-body">
      <div class="site">
        <header class="site-head"><svg class="maqam"><use href="#maqam"/></svg><i class="rule"></i><div class="orient"><span><b>Orient</b> <em>Travel</em></span><svg><use href="#swoosh"/></svg></div>
          <nav><a href="#">Manage Bookings</a><a href="#" lang="ar" class="ar">عربي</a><button class="call"><svg class="ph"><use href="#phone"/></svg>+971600562726<svg class="cv"><use href="#chev"/></svg></button><button class="login">Login</button></nav></header>
        <div class="cards">
          <article class="card tail"></article>
          <article class="card">
            <header><svg class="hi"><use href="#landing"/></svg><h2>MED - DXB</h2><span class="ref">Ref. Number AM104169</span><span>Class:Economy</span><span class="dur">Total Duration : 8 Hrs 55 Mins</span></header>
            <div class="seg"><div class="air"><div class="sv"><svg><use href="#saudia"/></svg><div><span lang="ar">السعودية</span><b>Saudia</b></div></div><small>Saudi Arabian Airlines</small><p>Airline PNR: Y94LF3</p></div>
              <div class="pt"><time>06:05 AM</time><p>Aug 24, 2025</p><p><b>Madinah</b></p><p>(MED) Prince Mohammad Bin Abdulaziz Airport</p><p>Terminal -</p></div>
              <div class="mid"><span>1 Hrs 10 Mins</span><svg><use href="#arrow"/></svg></div>
              <div class="pt"><time>07:15 AM</time><p>Aug 24, 2025</p><p><b>Jeddah</b></p><p>(JED) Jeddah Intl</p><p>Terminal - 1</p></div>
              <p class="bag">Baggage : <span>Adult : (Check in baggage);Adult : 1 PC(7 KG) (Cabin Baggage);Adult: 1 PC(7 KG) (Cabin Baggage);</span></p><p class="meal">Flight Meal : <span>Meal</span></p></div>
            <div class="seg"><div class="air"><div class="sv"><svg><use href="#saudia"/></svg><div><span lang="ar">السعودية</span><b>Saudia</b></div></div><small>Saudi Arabian Airlines</small><p>Airline PNR: Y94LF3</p></div>
              <div class="pt"><time>12:00 PM</time><p>Aug 24, 2025</p><p><b>Jeddah</b></p><p>(JED) Jeddah Intl</p><p>Terminal - 1</p></div>
              <div class="mid"><span>3 Hrs</span><svg><use href="#arrow"/></svg></div>
              <div class="pt"><time>04:00 PM</time><p>Aug 24, 2025</p><p><b>Dubai</b></p><p>(DXB) Dubai Intl Airport</p><p>Terminal - 1</p></div>
              <p class="bag">Baggage : <span>Adult : (Check in baggage);Adult : 1 PC(7 KG) (Cabin Baggage);Adult: 1 PC(7 KG) (Cabin Baggage);</span></p><p class="meal">Flight Meal :</p></div>
          </article>
          <article class="card hotel"><header><svg class="bed"><use href="#bed"/></svg><h2>Hotel details</h2><span class="ref">Ref. Number AM104158</span></header></article>
        </div>
      </div>
      <div class="fsb"><svg><use href="#chevup"/></svg><i></i><svg class="dn"><use href="#chev"/></svg></div>
      <button class="chat" aria-label="Chat"><svg><use href="#chat"/></svg></button>
    </div>
    <div class="taskbar"><button class="start" aria-label="Start"><svg><use href="#win"/></svg></button><label class="find"><svg class="mag"><use href="#search"/></svg><input type="text" placeholder="Type here to search" aria-label="Search"><svg class="hand"><use href="#hand"/></svg></label>
      <button aria-label="Task view"><svg class="sm"><use href="#taskview"/></svg></button><button aria-label="Mail"><svg><use href="#tbird"/></svg></button><button aria-label="Copilot"><svg><use href="#copilot"/></svg></button><button aria-label="Files"><svg><use href="#explorer"/></svg></button><button aria-label="Send"><svg><use href="#plane"/></svg></button><button class="alert"><svg><use href="#slack"/></svg><b>21</b></button><button aria-label="Chrome"><svg><use href="#chrome"/></svg></button><button aria-label="FileZilla"><svg><use href="#fz"/></svg></button><button class="run act" aria-label="Firefox"><svg><use href="#firefox"/></svg></button><button aria-label="Remote"><svg><use href="#remote"/></svg></button><button class="run" aria-label="Chrome window"><svg><use href="#chrome"/></svg></button><button class="run" aria-label="Notepad"><svg><use href="#notepad"/></svg></button><button class="run" aria-label="Paint"><svg><use href="#paint"/></svg></button>
      <div class="tray"><svg class="c"><use href="#chevup"/></svg><svg><use href="#sound"/></svg><svg><use href="#cam"/></svg><svg><use href="#battery"/></svg><svg><use href="#wifi"/></svg><svg class="kb"><use href="#keyb"/></svg><span class="lang">ENG</span><span class="clock">09:50<br>13-08-2025</span><span class="notif"><svg><use href="#note"/></svg><b>23</b></span></div></div>
  </div>
</section>

<section class="win cr cr-flight1">
  <div class="cr-in">
    <div class="strip"><button class="tsearch" aria-label="Search tabs"><svg><use href="#chev"/></svg></button>
      <div class="tabs"><div class="tab"><svg><use href="#redmine"/></svg><span>Issues - AI</span><svg class="tx"><use href="#x"/></svg></div><div class="tab"><svg><use href="#redmine"/></svg><span>Bug #1828</span><svg class="tx"><use href="#x"/></svg></div><div class="tab"><svg><use href="#redmine"/></svg><span>Bug #2435</span><svg class="tx"><use href="#x"/></svg></div><div class="tab"><svg><use href="#redmine"/></svg><span>Bug #1828</span><svg class="tx"><use href="#x"/></svg></div><div class="tab"><svg><use href="#redmine"/></svg><span>Bug #2435</span><svg class="tx"><use href="#x"/></svg></div><div class="tab"><svg class="gg"><use href="#globe"/></svg><span>maqam</span><svg class="tx"><use href="#x"/></svg></div><div class="tab"><svg class="gg"><use href="#globe"/></svg><span>maqam</span><svg class="tx"><use href="#x"/></svg></div><div class="tab on"><svg class="gg"><use href="#globe"/></svg><span>AM104169</span><svg class="tx"><use href="#x"/></svg></div><div class="tab"><svg class="gg"><use href="#globe"/></svg><span>maqam</span><svg class="tx"><use href="#x"/></svg></div><div class="tab"><svg><use href="#amazon"/></svg><span>Getting sta</span><svg class="tx"><use href="#x"/></svg></div></div>
      <button class="ib" aria-label="New tab"><svg><use href="#plus"/></svg></button>
      <div class="wc"><button class="ib" aria-label="Minimise"><svg><use href="#min"/></svg></button><button class="ib" aria-label="Restore"><svg><use href="#restore"/></svg></button><button class="ib" aria-label="Close"><svg><use href="#close"/></svg></button></div></div>
    <div class="cbar"><button class="ib dim" aria-label="Back"><svg><use href="#back"/></svg></button><button class="ib dim" aria-label="Forward"><svg><use href="#fwd"/></svg></button><button class="ib" aria-label="Reload"><svg><use href="#reload"/></svg></button>
      <div class="pill"><i><svg><use href="#tune"/></svg></i><input class="addr" aria-label="Address" value="maqamqa2admin.caxita.ca/en/AdminWeb/Reports/ManageFlightBookings?ttdId=104169&amp;tTypID=1&amp;status=3&amp;transID=104003&amp;Booking_No=64034"><svg><use href="#star"/></svg></div>
      <div class="ctools"><button class="ib" aria-label="Extensions"><svg><use href="#puzzle"/></svg></button><i class="vs"></i><button class="ib me" aria-label="Profile"><svg><use href="#person"/></svg></button><button class="ib" aria-label="Menu"><svg><use href="#dots"/></svg></button></div></div>
    <div class="marks"><svg><use href="#apps"/></svg><i class="vs"></i><a href="#"><svg class="fo"><use href="#folder"/></svg>work file</a><a href="#"><svg><use href="#globe"/></svg>logo</a><a href="#"><svg><use href="#bird"/></svg>SkySOUQ</a><a href="#"><svg><use href="#ma"/></svg>maqam</a><a href="#"><svg><use href="#globe"/></svg>CAXITA - HRMS | Lo...</a><a href="#"><svg><use href="#crest"/></svg>AKBAR ALAM</a><a href="#"><svg><use href="#bird"/></svg>skysouqb2c</a><a href="#"><svg><use href="#crest"/></svg>Akbaralam admin</a><a href="#"><b class="wt">WT</b>Wonder Travel</a><a href="#"><svg><use href="#ball"/></svg>Ambassador Travels</a><a href="#"><svg><use href="#sheet"/></svg>QA Team Allocation...</a><span class="more">»</span><i class="vs"></i><a href="#"><svg class="fo"><use href="#folder"/></svg>All Bookmarks</a></div>
    <div class="cbody">
      <nav class="side"><ul><li><a href="#">Visa Application</a></li><li><a href="#">Package Management</a></li><li><a href="#">Payment Management</a></li><li><a href="#">Reports Management</a></li><li><a href="#">Inventory Management</a></li><li><a href="#">Enquiry Management</a></li><li><a href="#">Admin Management</a></li><li><a href="#">System Management</a></li><li><a href="#">XML Out</a></li><li><a href="#">Push Notification</a></li><li><a href="#">Content Management</a></li><li><a href="#">Configuration Management</a></li><li><a href="#">System Details</a></li><li><a href="#"></a></li></ul></nav>
      <div class="main"><div class="sheet white"><div class="inner">
        <div class="rest"><i></i><i></i><i></i><i></i><i></i></div>
        <section class="api"><h3>API Details</h3><table class="grid ap"><tbody><tr><th>Type</th><td>Flight</td><td>GalieloUAPI</td><td>GalieloUAPI_112884</td><th>API Reference</th><td>CMZR8R</td></tr></tbody></table></section>
        <button class="gold edit">Edit</button>
        <section class="itin"><h3>Itinerary Details</h3>
          <table class="grid it blue"><thead><tr><th>Airline</th><th>Departure</th><th>Arrival</th><th>Details</th></tr></thead><tbody>
          <tr><td>Saudi Arabian Airlines</td><td>Dubai Intl Airport(DXB)</td><td>Jeddah Intl(JED)</td><td>Economy</td></tr>
          <tr><td>SV<br>Codeshare Info:<br>&nbsp;</td><td>22-08-2025</td><td>22-08-2025</td><td>Class V</td></tr>
          <tr><td><br>AirPNR :&nbsp; Y94LF3</td><td>5:30PM</td><td>7:30PM</td><td>3 Hrs.0 Mnts</td></tr>
          <tr><td></td><td>Terminal :&nbsp; 1</td><td>Terminal :&nbsp; 1</td><td>BaggageInfo :<br>Cabin Baggage:<br><a href="#">showmore</a></td></tr>
          <tr><td>Segment Number :&nbsp; 1</td><td>Stop Over Airport :</td><td></td><td></td></tr>
          <tr><td>FlightCode :&nbsp; 0589</td><td>Meals :&nbsp; Meal</td><td>Is Refundable :&nbsp; No</td><td>Refund Type :&nbsp; Non Refundable</td></tr></tbody></table>
          <button class="gold">Add</button></section>
        <section class="itin"><h3>Itinerary Details</h3>
          <table class="grid it"><thead><tr><th>Airline</th><th>Departure</th><th>Arrival</th><th>Details</th></tr></thead><tbody>
          <tr><td>Saudi Arabian Airlines</td><td>Prince Mohammad Bin Abdulaziz Airport(MED)</td><td>Jeddah Intl(JED)</td><td>Economy</td></tr></tbody></table></section>
      </div></div></div>
      <div class="csb"><i></i></div>
      <button class="top" aria-label="Back to top"><svg><use href="#chevup"/></svg></button>
    </div>
  </div>
</section>
</div>
</main>
</body>
</html>
```
FILE: styles.css
```css
* { box-sizing: border-box; }
body { margin: 0; background: #fff; color: #333; font: 17px/25px "Liberation Sans", Arial, sans-serif; }
a { color: inherit; text-decoration: none; }
p, h2, h3, ul { margin: 0; padding: 0; }
button { font: inherit; color: inherit; border: 0; padding: 0; background: none; }
svg { flex: none; display: block; }
.defs { position: absolute; width: 0; height: 0; }
.desk { display: grid; grid-template-columns: minmax(0, 1936fr) minmax(0, 1964fr); align-items: start; }
.win { position: relative; overflow: hidden; background: #fff; }
.ib { display: flex; align-items: center; justify-content: center; width: 30px; height: 30px; flex: none; }
.ib svg { width: 20px; height: 20px; }
.dim { opacity: .45; }
.addr { flex: 1; min-width: 0; border: 0; padding: 0; outline: 0; font: 16px/24px "Open Sans", "Noto Sans", sans-serif; background: transparent; color: transparent; -webkit-background-clip: text; background-clip: text; }

/* Firefox windows */
.ff { margin-right: 17px; }
.ff-top { height: 1031px; border-bottom: 2px solid #1d2b40; }
.right .ff { margin-right: 45px; height: 1035px; }
.ff-in { display: flex; flex-direction: column; height: 100%; font-family: "Open Sans", "Noto Sans", sans-serif; font-size: 14px; color: #15141a; }
.ff-scrolled .ff-in { margin-top: -44px; height: calc(100% + 44px); }
.ff-tabs { display: flex; align-items: center; height: 55px; flex: none; background: #e9e9eb; }
.recent { width: 54px; height: 55px; border-right: 1px solid #c4c4c8; }
.ff-tab { display: flex; align-items: center; gap: 7px; width: 276px; height: 45px; margin: 0 10px 0 5px; padding: 0 6px 0 11px; background: #fff; border-radius: 5px; box-shadow: 0 1px 3px #0004; }
.ff-tab > svg { width: 18px; height: 18px; }
.ff-tab .ib { margin-left: auto; }
.ff-tab .ib svg { width: 16px; height: 16px; }
.wc { display: flex; margin-left: auto; padding-right: 12px; gap: 28px; }
.wc .first { margin-right: 44px; }
.ff-bar { display: flex; align-items: center; height: 50px; flex: none; background: #f9f9fb; padding: 0 13px 0 14px; gap: 16px; color: #45454f; }
.ff-url { display: flex; align-items: center; gap: 15px; flex: 1; height: 40px; margin-left: 138px; padding: 0 10px; background: #ebebed; border-radius: 5px; }
.ff-url svg { width: 20px; height: 20px; }
.ff-url .addr { margin-left: -3px; background-image: linear-gradient(90deg, #77777f 121px, #15141a 121px, #15141a 185px, #77777f 185px); }
.ff-tools { display: flex; gap: 16px; margin-left: 137px; }
.ff-marks { display: flex; align-items: center; gap: 20px; height: 36px; flex: none; padding: 0 13px 0 15px; background: #f9f9fb; border-bottom: 1px solid #ccc; }
.ff-marks a { display: flex; align-items: center; gap: 7px; }
.ff-marks svg { width: 18px; height: 20px; }
.ff-marks .end { margin-left: auto; }
.ff-body { position: relative; display: flex; flex: 1; min-height: 0; background: #fbfbfb; }
.site { flex: 1; min-width: 0; overflow: hidden; font: 17px/27px "Liberation Sans", Arial, sans-serif; color: #3d434a; }
.site-head { position: relative; z-index: 2; display: flex; align-items: flex-start; height: 124px; padding: 13px 39px; background: #fff; box-shadow: 0 2px 10px #0003; }
.maqam { width: 168px; height: 46px; margin-top: 34px; }
.rule { width: 2px; height: 63px; margin: 28px 12px 0 17px; background: #333; }
.orient { margin-top: 28px; }
.orient span { display: block; font: italic 900 30px/32px Lato, sans-serif; color: #164f99; white-space: nowrap; }
.orient em { color: #f03a3e; }
.orient svg { width: 142px; height: 28px; margin-left: 28px; }
.site-head nav { display: flex; align-items: center; margin-left: auto; font: 19px/38px Inter, sans-serif; color: #333; }
.ar { font: 20px/38px "DejaVu Sans", sans-serif; margin: 0 37px 0 25px; }
.call { display: flex; align-items: center; gap: 7px; height: 40px; padding: 0 11px; background: #2a7e53; border-radius: 6px; color: #fff; font: 500 16px Inter, sans-serif; }
.ph { width: 15px; height: 23px; }
.cv { width: 16px; height: 16px; }
.login { height: 40px; margin-left: 7px; padding: 0 13px; border: 1px solid #2a7e53; border-radius: 7px; font: 600 18px Inter, sans-serif; }
.cards { display: flex; flex-direction: column; gap: 27px; }
.card { position: relative; width: 1040px; max-width: 100%; margin: 0 auto; background: #fff; border: 1px solid #ccc; border-radius: 16px; flex: none; padding-bottom: 26px; }
.card > header { display: flex; align-items: center; height: 76px; margin: -1px; padding: 4px 26px 0; background: #6d6d6d; color: #fff; border-radius: 16px 16px 0 0; }
.card h2 { font: bold 20px/27px "Liberation Sans", Arial, sans-serif; margin-right: 22px; }
.hi { width: 28px; height: 28px; margin-right: 15px; }
.bed { width: 34px; height: 26px; margin: 0 24px 0 6px; }
.ref { margin-right: 53px; }
.dur { margin: -5px 0 0 auto; }
.pax { margin-top: -8px; height: 73px; padding: 0 25px; border-radius: 0 0 16px 16px; border-top: 0; }
.dotted { position: absolute; left: 25px; right: 25px; top: 45px; border-top: 1px dotted #888; }
.cut { position: absolute; right: 309px; bottom: -1px; width: 31px; height: 17px; background: #fbfbfb; border: 1px solid #ccc; border-bottom: 0; border-radius: 16px 16px 0 0; }
.cut::before { content: ""; position: absolute; left: 14px; bottom: 16px; height: 58px; border-left: 1px solid #bbb; }
.tail { height: 35px; border-top: 0; border-radius: 0 0 16px 16px; padding: 0; }
.seg { display: grid; grid-template-columns: 237px 235px 259px 1fr; padding: 14px 25px; }
.air { display: flex; flex-direction: column; padding-top: 12px; }
.sv { display: flex; gap: 6px; height: 48px; color: #0c6b3b; }
.sv svg { width: 64px; height: 48px; }
.sv div { display: flex; flex-direction: column; padding-top: 4px; font: 19px/24px "DejaVu Sans", sans-serif; }
.sv b { font: 500 18px/20px "DejaVu Sans", sans-serif; }
.air small { margin-top: 6px; font-size: 15px; line-height: 29px; }
.air p { line-height: 29px; }
.pt time { display: block; font-size: 21px; font-weight: bold; color: #cca240; }
.mid { display: flex; flex-direction: column; align-items: center; padding-top: 23px; gap: 5px; margin-right: 53px; }
.mid svg { width: 154px; height: 18px; }
.bag, .meal { grid-column: 1 / -1; height: 27px; margin-top: 6px; white-space: nowrap; }
.bag span, .meal span { font: 18px/26px Inter, sans-serif; }
.meal { margin-top: 14px; }
.fsb { display: flex; flex-direction: column; align-items: center; width: 20px; flex: none; background: #f0f0f0; color: #505050; }
.fsb svg { width: 14px; height: 20px; }
.fsb i { width: 20px; height: 127px; margin: 83px 0 auto; background: #cdcdcd; }
.ff-scrolled .fsb i { margin-top: 144px; }
.chat { position: absolute; right: 32px; bottom: 151px; display: flex; align-items: center; justify-content: center; width: 76px; height: 76px; border-radius: 50%; background: #7dbd6b; box-shadow: 0 2px 8px #0002; }
.chat svg { width: 42px; height: 42px; }

/* Chrome windows */
.cr-adviser { height: 1020px; margin: -27px 33px 0 6px; z-index: 1; }
.cr-flight2 { height: 1079px; margin: 16px 81px 0 0; }
.cr-flight1 { height: 1017px; margin: 23px 27px 0 18px; }
.cr-in { display: flex; flex-direction: column; height: 100%; color: #1f1f1f; }
.cr-adviser .cr-in { margin-left: -21px; }
.cr-flight2 .cr-in { margin-left: -64px; }
.strip { display: flex; align-items: center; height: 50px; flex: none; background: #b5e7f2; font: 14px/20px "Open Sans", "Noto Sans", sans-serif; }
.tsearch { display: flex; align-items: center; justify-content: center; width: 35px; height: 34px; margin: 0 3px 0 8px; background: #fff; border-radius: 11px; flex: none; }
.tsearch svg { width: 14px; height: 14px; }
.tabs { display: flex; flex: 0 1 1596px; height: 50px; padding-top: 7px; min-width: 0; }
.tab { position: relative; display: flex; align-items: center; gap: 10px; flex: 1 1 0; min-width: 0; padding: 0 16px 6px 15px; }
.tab > svg { width: 20px; height: 20px; }
.tab .gg { color: #5f6368; }
.tab span { flex: 1; min-width: 0; overflow: hidden; white-space: nowrap; -webkit-mask-image: linear-gradient(90deg, #000 75%, #0004); mask-image: linear-gradient(90deg, #000 75%, #0004); }
.tab .tx { width: 16px; height: 16px; }
.tab:not(.on)::after { content: ""; position: absolute; right: 0; top: 8px; width: 2px; height: 20px; background: #fff; }
.tab.on { background: #fff; border-radius: 12px 12px 0 0; }
.tabs > .tab:has(+ .on)::after { display: none; }
.strip > .ib { margin-left: 6px; }
.strip .wc { gap: 27px; padding-right: 13px; }
.cbar { display: flex; align-items: center; height: 58px; flex: none; padding: 0 12px; gap: 15px; }
.pill { display: flex; align-items: center; gap: 10px; flex: 1; height: 42px; margin-left: 3px; padding: 0 19px 0 5px; background: #e1e1e1; border-radius: 21px; }
.pill i { display: flex; align-items: center; justify-content: center; width: 31px; height: 31px; background: #fff; border-radius: 50%; }
.pill i svg { width: 18px; height: 18px; }
.pill > svg { width: 20px; height: 20px; color: #5f6368; }
.pill .addr { font-size: 17px; background-image: linear-gradient(90deg, #1f1f1f 214px, #5f6368 214px); }
.ctools { display: flex; align-items: center; gap: 15px; margin-left: 3px; }
.vs { width: 2px; height: 20px; background: #b5e7f2; flex: none; }
.me { color: #2b8aa5; }
.marks { display: flex; align-items: center; gap: 22px; height: 43px; flex: none; padding: 0 17px 9px; border-bottom: 1px solid #ccc; font: 14px/20px "Open Sans", "Noto Sans", sans-serif; white-space: nowrap; }
.marks > svg, .marks a svg { width: 18px; height: 19px; }
.marks a { display: flex; align-items: center; gap: 9px; }
.marks .fo { color: #5f6368; width: 20px; }
.more { margin-left: auto; font-size: 18px; }
.wt { font: bold 14px Lato, sans-serif; color: #f39a1b; }
.cbody { position: relative; display: flex; flex: 1; min-height: 0; overflow: hidden; }
.side { width: 341px; flex: none; color: #333; }
.side ul { list-style: none; border-right: 1px solid #ccc; }
.cr-adviser .side { margin-top: -6px; }
.cr-flight2 .side { margin-top: -35px; }
.cr-flight1 .side { margin-top: 5px; }
.cr-flight1 .side ul { border-top: 1px solid #ccc; }
.cr-flight2 .side ul { border-bottom: 3px double #ccc; }
.side a { display: flex; align-items: center; justify-content: space-between; height: 65px; padding: 0 7px 0 15px; border-bottom: 1px solid #ccc; }
.side li:nth-child(even) a { height: 64px; }
.side a::after { content: ""; border: 8px solid transparent; border-top: 9px solid #253b6e; border-bottom: 0; }
.main { flex: 1; min-width: 0; margin: 0 36px 0 24px; padding: 0 15px; background: #f2f2f2; }
.sheet { padding: 25px 13px 0; margin-top: 28px; border: 1px solid #ddd; min-height: 1000px; box-shadow: 0 0 3px #0002; }
.sheet.white { margin-top: 0; padding: 0 12px; background: #fff; border-top: 0; }
.inner { min-height: 1000px; padding: 0 13px; border: 1px solid #ccc; border-width: 0 1px; }
.heads { display: flex; margin-bottom: 19px; font: 18px/30px Lato, sans-serif; color: #cca240; }
.heads span:first-child { width: 41%; }
.heads span:last-child { margin-left: auto; }
.panel { padding: 0 0 29px; background: #fff; border: 1px solid #ccc; }
.gtabs { display: flex; margin-bottom: 25px; background: #cca240; color: #fff; }
.gtabs a { padding: 0 22px 0 20px; line-height: 50px; }
.gtabs .on { background: #000; }
.grid { border-collapse: collapse; table-layout: fixed; width: 100%; color: #333; }
.grid th, .grid td { height: 38px; padding: 6px; border: 1px solid #e8e8e8; text-align: left; vertical-align: top; font-weight: normal; }
.grid thead th { background: #efefef; }
.tx.grid, .hs.grid { width: calc(100% - 25px); margin: 0 12px 0 13px; }
.tx.grid td, .tx.grid th, .hs.grid td, .hs.grid th { padding: 0 7px; vertical-align: middle; }
.tx.grid tr:nth-child(even) td { height: 39px; }
.tx th:nth-child(1) { width: 280px; }
.tx th:nth-child(2) { width: 311px; }
.tx th:nth-child(3), .tx th:nth-child(4) { width: 218px; }
.tx th:nth-child(5) { width: 232px; }
.tx .hl td { background: #e3feff; }
.tx button { display: flex; align-items: center; gap: 4px; height: 30px; padding: 0 5px; background: #cca240; color: #fff; font-size: 15px; }
.tx button svg { width: 17px; height: 17px; }
.pager { display: flex; gap: 5px; margin: 15px 13px 0; }
.pager a { width: 32px; height: 38px; line-height: 34px; text-align: center; border: 1px solid #ddd; border-bottom: 2px solid #14144d; color: #14144d; }
.pager a:first-child { border-radius: 5px 0 0 5px; }
.pager a:last-child { border-radius: 0 5px 5px 0; }
.pager .on { background: #cca240; border-color: #cca240 #cca240 #14144d; color: #fff; }
.hist { margin-top: 13px; border-color: #e8e8e8; }
.hist h3 { padding: 22px 12px 15px; font: 18px/30px Lato, sans-serif; color: #cca240; }
.hs th:nth-child(1) { width: 94px; }
.hs th:nth-child(2) { width: 458px; }
.hs th:nth-child(3) { width: 255px; }
.hs th:nth-child(4) { width: 388px; }
.csb { display: flex; flex-direction: column; align-items: center; justify-content: space-between; width: 18px; flex: none; padding: 7px 0; background: #fcfcfc; }
.csb::before { content: ""; border: 6px solid transparent; border-bottom: 8px solid #8b8b8b; border-top: 0; }
.csb.end::after { content: ""; border: 6px solid transparent; border-top: 8px solid #8b8b8b; border-bottom: 0; }
.csb i { width: 11px; height: 430px; margin: 128px 0 auto; background: #8b8b8b; border-radius: 6px; }
.cr-flight1 .csb i { margin-top: 146px; height: 196px; }
.cr-flight2 .csb i { margin-top: 313px; height: 195px; }
.top { position: absolute; right: 46px; bottom: 17px; display: flex; align-items: center; justify-content: center; width: 54px; height: 54px; border-radius: 50%; background: #cca240; color: #fff; }
.top svg { width: 28px; height: 28px; }
.rest { display: flex; height: 11px; border: 1px solid #e8e8e8; border-top: 0; }
.rest i { width: 76px; border-right: 1px solid #e8e8e8; }
.rest i:nth-child(2) { width: 169px; }
.rest i:nth-child(3) { flex: 1; }
.rest i:nth-child(5) { width: 155px; border: 0; }
.api { margin-top: 12px; border: 1px solid #e8e8e8; }
.api h3, .itin h3 { height: 46px; padding: 6px; font: 17px/25px "Liberation Sans", Arial, sans-serif; color: #000; }
.api h3 { height: 44px; }
.ap th { color: #000; }
.ap.grid td, .ap.grid th { height: 43px; }
.gold { display: block; width: 113px; height: 50px; margin: 6px 6px 0 auto; background: #cca240; color: #fff; font-size: 18px; }
.gold.edit { margin: 13px 0 18px auto; }
.itin { margin-bottom: 13px; padding-bottom: 25px; border: 1px solid #e8e8e8; }
.cr-flight2 .itin:first-child { margin-top: -25px; }
.it.grid thead th { font-weight: bold; }
.it.grid tbody td { border-top: 0; border-bottom: 0; }
.it.grid tbody tr:last-child td { border-bottom: 1px solid #e8e8e8; }
.it a { color: #cca240; font-size: 15px; }
.blue tbody td { background: #e3feff; }

/* Windows task bar and notification */
.taskbar { display: flex; height: 49px; flex: none; background: linear-gradient(90deg, #23383f 55%, #1b2743 82%); color: #fff; font: 14px/23px "Open Sans", "Noto Sans", sans-serif; }
.taskbar > button { position: relative; display: flex; align-items: center; justify-content: center; width: 62px; flex: none; }
.taskbar > button svg { width: 31px; height: 31px; }
.taskbar > .start { width: 60px; }
.taskbar > .start svg { width: 21px; height: 21px; }
.taskbar > button .sm { width: 24px; height: 24px; }
.find { display: flex; align-items: center; width: 360px; flex: none; padding-left: 14px; background: #f2f2f2; border-top: 1px solid #bbb; }
.mag { width: 22px; height: 22px; margin-right: 14px; }
.find input { flex: 1; min-width: 0; border: 0; padding: 0; background: none; font: 17px/24px "Open Sans", "Noto Sans", sans-serif; color: #333; }
.find input::placeholder { color: #444; opacity: 1; }
.hand { width: 90px; height: 48px; margin-right: 4px; }
.taskbar > .alert { background: #a76a31; border-bottom: 2px solid #ff7a00; }
.alert b { position: absolute; left: 28px; top: 21px; width: 18px; font: 12px/16px "Open Sans", sans-serif; }
.taskbar > .run::after { content: ""; position: absolute; left: 5px; right: 5px; bottom: 0; height: 2px; background: #76b9ed; }
.taskbar > .act { background: #4c5f69; }
.taskbar > .act::after { left: 0; right: 0; }
.tray { display: flex; align-items: center; margin-left: auto; border-right: 1px solid #77808f; margin-right: 4px; }
.tray > svg { width: 23px; height: 23px; margin: 0 4px; }
.tray .c { width: 19px; height: 19px; margin: 0 6px; }
.tray .kb { width: 30px; height: 18px; margin: 0 3px; }
.lang { width: 50px; text-align: center; }
.clock { width: 86px; text-align: center; }
.notif { position: relative; width: 63px; height: 49px; }
.notif svg { width: 20px; height: 20px; margin: 15px 0 0 17px; }
.notif b { position: absolute; left: 24px; top: 24px; width: 24px; height: 21px; border-radius: 11px; border: 1px solid #888; background: #2b2f33; text-align: center; font: bold 12px/19px "Open Sans", sans-serif; }
.toast { position: absolute; right: 19px; bottom: 65px; width: 455px; height: 139px; padding: 19px 20px; background: linear-gradient(120deg, #343c3d 60%, #3d352e); color: #fff; font: 18px/25px "Open Sans", "Noto Sans", sans-serif; box-shadow: 0 2px 10px #0004; }
.th { display: flex; align-items: center; gap: 11px; height: 30px; margin-bottom: 15px; font-size: 14px; }
.th svg { width: 19px; height: 19px; }
.th .ib { margin-left: auto; color: #bbb; }
.toast b { font-weight: 600; }
.toast p { color: #a8abab; white-space: nowrap; }
```
